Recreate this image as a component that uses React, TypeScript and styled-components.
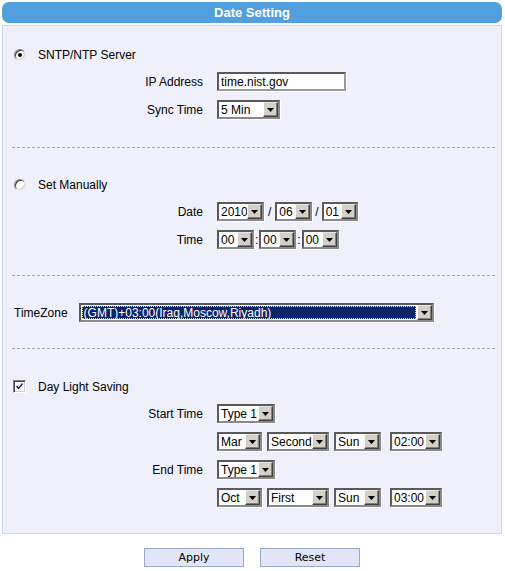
import React from "react";
import styled, { createGlobalStyle } from "styled-components";

const GlobalStyle = createGlobalStyle`
  html, body { margin: 0; padding: 0; background: #ffffff; }
  body { font-family: "Liberation Sans", Arial, sans-serif; font-size: 12px; color: #000; }
`;

const Page = styled.div`
  width: 500px;
  margin: 2px 0 0 2px;
`;

const Header = styled.div`
  height: 21px;
  border-radius: 7px;
  background: #529fe0;
  color: #fff;
  font-weight: bold;
  font-size: 13px;
  display: flex;
  align-items: center;
  justify-content: center;
`;

const Panel = styled.div`
  margin-top: 2px;
  border: 1px solid #c6d8f2;
  background: #f0f0fc;
`;

const Section = styled.div<{ $top?: number; $bottom?: number }>`
  display: flex;
  flex-direction: column;
  gap: 9px;
  padding: ${(p) => p.$top ?? 27}px 0 ${(p) => p.$bottom ?? 26}px;
`;

const Divider = styled.div`
  margin: 0 6px 0 9px;
  border-top: 1px dashed #a8a8b0;
`;

const OptionRow = styled.div`
  display: flex;
  align-items: center;
  gap: 12px;
  height: 17px;
  padding-left: 11px;
`;

const Radio = styled.span<{ $checked?: boolean }>`
  box-sizing: border-box;
  width: 12px;
  height: 12px;
  border-radius: 50%;
  background: #fff;
  border: 1px solid;
  border-color: #808080 #e8e8e8 #e8e8e8 #808080;
  box-shadow: inset 1px 1px 0 #404040, inset -1px -1px 0 #d4d0c8;
  display: flex;
  align-items: center;
  justify-content: center;
  &::after {
    content: "";
    width: 4px;
    height: 4px;
    border-radius: 50%;
    background: ${(p) => (p.$checked ? "#000" : "transparent")};
  }
`;

const CheckBox = styled.span`
  box-sizing: border-box;
  width: 13px;
  height: 13px;
  margin-left: -1px;
  background: #fff;
  border: 1px solid;
  border-color: #808080 #fff #fff #808080;
  box-shadow: inset 1px 1px 0 #404040, inset -1px -1px 0 #d4d0c8;
  display: flex;
  align-items: center;
  justify-content: center;
`;

const FieldRow = styled.div`
  display: grid;
  grid-template-columns: 200px auto;
  column-gap: 14px;
  align-items: center;
  height: 19px;
`;

const Label = styled.span`
  text-align: right;
`;

const Controls = styled.div`
  display: flex;
  align-items: center;
`;

const Sep = styled.span<{ $space: number }>`
  margin: 0 ${(p) => p.$space}px;
`;

const TextInput = styled.div`
  box-sizing: border-box;
  width: 129px;
  height: 19px;
  background: #fff;
  border: 2px solid;
  border-color: #5a5a5a #9a9a9a #9a9a9a #5a5a5a;
  box-shadow: 1px 1px 0 #fff;
  padding-left: 2px;
  display: flex;
  align-items: center;
`;

const SelectBox = styled.div<{ $width: number; $gap?: number }>`
  box-sizing: border-box;
  width: ${(p) => p.$width}px;
  height: 19px;
  margin-left: ${(p) => p.$gap ?? 0}px;
  display: flex;
  background: #fff;
  border: 2px solid;
  border-color: #5a5a5a #8a8a8a #8a8a8a #5a5a5a;
  box-shadow: 1px 1px 0 #fff;
`;

const SelectValue = styled.div<{ $active?: boolean }>`
  flex: 1;
  display: flex;
  align-items: center;
  padding-left: 2px;
  white-space: nowrap;
  overflow: hidden;
  ${(p) =>
    p.$active
      ? `background: #0a246a; color: #fff; margin: 1px; outline: 1px dotted #e8e0a0; outline-offset: -1px;`
      : ""}
`;

const ArrowButton = styled.div`
  box-sizing: border-box;
  width: 15px;
  background: #d4d0c8;
  border: 1px solid;
  border-color: #e8e6e0 #404040 #404040 #ffffff;
  box-shadow: inset -1px -1px 0 #808080;
  display: flex;
  align-items: center;
  justify-content: center;
`;

const ZoneRow = styled.div`
  display: flex;
  align-items: center;
  gap: 11px;
  height: 19px;
  padding-left: 11px;
`;

const ButtonBar = styled.div`
  display: flex;
  justify-content: center;
  gap: 16px;
  margin-top: 14px;
`;

const Button = styled.button`
  box-sizing: border-box;
  width: 100px;
  height: 19px;
  padding: 0;
  background: #e0e6f8;
  border: 1px solid #9aaacb;
  font-family: "DejaVu Sans", Tahoma, sans-serif;
  font-size: 11px;
  color: #000;
`;

const Select: React.FC<{ value: string; width: number; gap?: number; active?: boolean }> = ({
  value,
  width,
  gap,
  active,
}) => (
  <SelectBox $width={width} $gap={gap}>
    <SelectValue $active={active}>{value}</SelectValue>
    <ArrowButton>
      <svg width="7" height="4" viewBox="0 0 7 4">
        <polygon points="0,0 7,0 3.5,4" fill="#000" />
      </svg>
    </ArrowButton>
  </SelectBox>
);

export default function App() {
  return (
    <Page>
      <GlobalStyle />
      <Header>Date Setting</Header>
      <Panel>
        <Section $top={20} $bottom={28}>
          <OptionRow>
            <Radio $checked />
            <span>SNTP/NTP Server</span>
          </OptionRow>
          <FieldRow>
            <Label>IP Address</Label>
            <Controls>
              <TextInput>time.nist.gov</TextInput>
            </Controls>
          </FieldRow>
          <FieldRow>
            <Label>Sync Time</Label>
            <Controls>
              <Select value="5 Min" width={63} />
            </Controls>
          </FieldRow>
        </Section>
        <Divider />
        <Section $top={28}>
          <OptionRow>
            <Radio />
            <span>Set Manually</span>
          </OptionRow>
          <FieldRow>
            <Label>Date</Label>
            <Controls>
              <Select value="2010" width={47} />
              <Sep $space={4}>/</Sep>
              <Select value="06" width={37} />
              <Sep $space={3}>/</Sep>
              <Select value="01" width={36} />
            </Controls>
          </FieldRow>
          <FieldRow>
            <Label>Time</Label>
            <Controls>
              <Select value="00" width={37} />
              <Sep $space={1}>:</Sep>
              <Select value="00" width={37} />
              <Sep $space={1}>:</Sep>
              <Select value="00" width={37} />
            </Controls>
          </FieldRow>
        </Section>
        <Divider />
        <Section>
          <ZoneRow>
            <span>TimeZone</span>
            <Select value="(GMT)+03:00(Iraq,Moscow,Riyadh)" width={355} active />
          </ZoneRow>
        </Section>
        <Divider />
        <Section $top={29}>
          <OptionRow>
            <CheckBox>
              <svg width="7" height="7" viewBox="0 0 7 7">
                <polyline points="0.5,3 2.5,5.5 6.5,0.5" fill="none" stroke="#1a1a50" strokeWidth="1.4" />
              </svg>
            </CheckBox>
            <span>Day Light Saving</span>
          </OptionRow>
          <FieldRow>
            <Label>Start Time</Label>
            <Controls>
              <Select value="Type 1" width={58} />
            </Controls>
          </FieldRow>
          <FieldRow>
            <Label />
            <Controls>
              <Select value="Mar" width={45} />
              <Select value="Second" width={62} gap={5} />
              <Select value="Sun" width={47} gap={5} />
              <Select value="02:00" width={52} gap={9} />
            </Controls>
          </FieldRow>
          <FieldRow>
            <Label>End Time</Label>
            <Controls>
              <Select value="Type 1" width={58} />
            </Controls>
          </FieldRow>
          <FieldRow>
            <Label />
            <Controls>
              <Select value="Oct" width={45} />
              <Select value="First" width={62} gap={5} />
              <Select value="Sun" width={47} gap={5} />
              <Select value="03:00" width={52} gap={9} />
            </Controls>
          </FieldRow>
        </Section>
      </Panel>
      <ButtonBar>
        <Button>Apply</Button>
        <Button>Reset</Button>
      </ButtonBar>
    </Page>
  );
}
